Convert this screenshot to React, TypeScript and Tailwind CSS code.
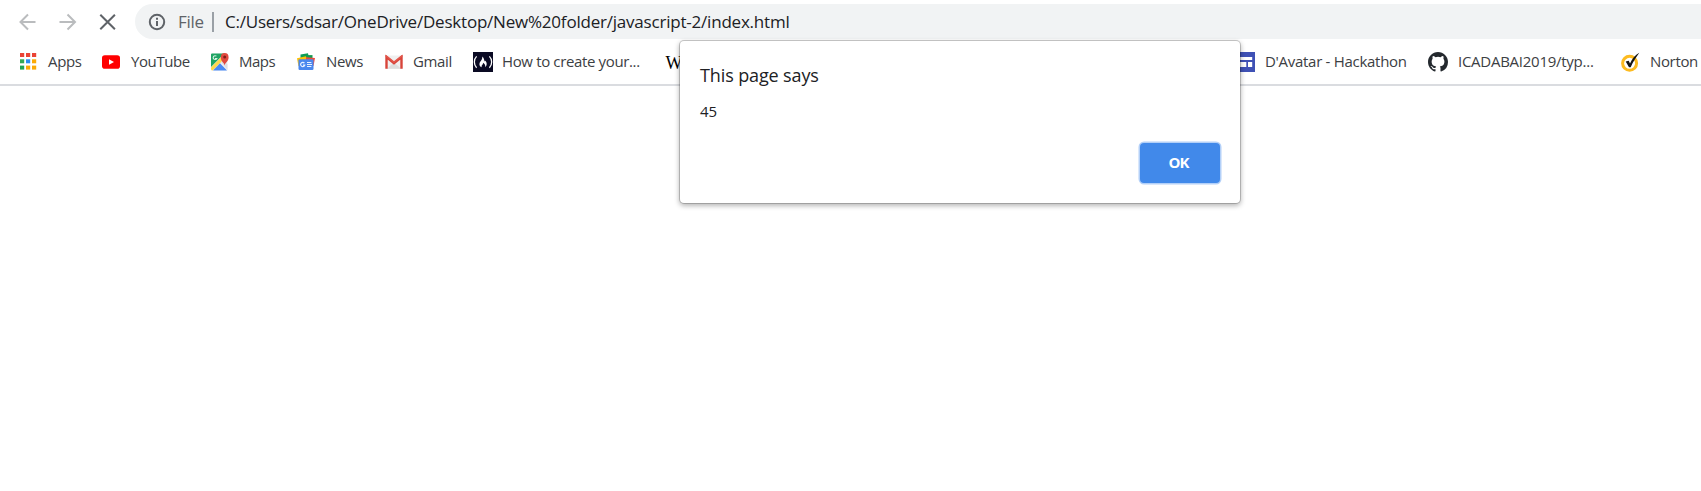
import type { ReactNode } from "react";

const Icon = ({ children }: { children: ReactNode }) => (
  <svg viewBox="0 0 20 20" className="h-5 w-5 shrink-0">{children}</svg>
);

const AppsIcon = () => (
  <Icon>
    {[["#ea4335", "#ea4335", "#ea4335"], ["#34a853", "#2a8cf0", "#fbaa05"], ["#21a453", "#fbaa05", "#fbaa05"]].map((row, r) =>
      row.map((fill, c) => <rect key={`${r}${c}`} x={2 + c * 6} y={1 + r * 6.3} width="4.2" height="4" fill={fill} />)
    )}
  </Icon>
);

const YouTubeIcon = () => (
  <Icon>
    <rect x="1" y="3.3" width="18" height="13.4" rx="2.8" fill="#f00" />
    <path d="M8 7.2v5.6l5-2.8z" fill="#fff" />
  </Icon>
);

const MapsIcon = () => (
  <Icon>
    <path d="M2 1.6h14l1.5 2v14.8H1V2.6z" fill="#f1f1f1" />
    <path d="M2 1.6h12.4L1 15V2.6q0-1 1-1z" fill="#1fa463" />
    <path d="M1 15.5 11.4 5l2 2.8L2.6 18.4Q1 18.4 1 17z" fill="#ffd84b" />
    <path d="M3 18.4 10 11.2l7 7.2z" fill="#4a89f3" />
    <path d="m11 10.3 3-2.8 3.5 5v5.3z" fill="#dfe0e3" />
    <path d="M14.6 13.4c-.3-3-3.8-4-3.8-8a3.8 4.2 0 0 1 7.8 0c0 4-3.6 5-4 8z" fill="#e04a3f" />
    <circle cx="14.7" cy="5" r="1.5" fill="#7e1d16" />
    <path d="M6.4 4.2a1.9 1.9 0 1 0 .3 2.4H5" fill="none" stroke="#d9f3e4" strokeWidth="1.1" />
  </Icon>
);

const NewsIcon = () => (
  <Icon>
    <path d="M4.5 2.6 12 1.3l1 5H4.5z" fill="#0c9d58" />
    <path d="M9 3.1h7.5V8H9z" fill="#139a50" />
    <path d="m1 6.2 9-2 1 5-8.5 5z" fill="#ffc107" />
    <path d="m10 5.2 9 .8-1.500 8L10 10z" fill="#ee4b3e" />
    <rect x="2.5" y="7.2" width="15" height="10.8" rx="1.2" fill="#4a87ee" />
    <path d="M8.4 11.2a2.1 2.1 0 1 0 .3 2H7M11 10.5h4.4M11 12.5h5M11 14.5h4.4" fill="none" stroke="#e9f0ff" strokeWidth="1.2" />
  </Icon>
);

const GmailIcon = () => (
  <Icon>
    <path d="M2 3.5h16v13.3H2z" fill="#f0f0f0" />
    <path d="m3 16.8 7-6.5 7 6.5z" fill="#dedede" />
    <path d="M2.5 16.8V5l7.5 6.3L17.5 5v11.8" fill="none" stroke="#d8443a" strokeWidth="2.4" />
    <path d="m1.8 3.6 8.2 6.6 8.2-6.6" fill="none" stroke="#e3564b" strokeWidth="1.5" />
  </Icon>
);

const CampIcon = () => (
  <Icon>
    <rect width="20" height="20" fill="#0a0a23" />
    <path d="M3.6 4.4C.6 7.3.6 12.7 3.6 15.8M16.4 4.4c3 2.9 3 8.3 0 11.4" fill="none" stroke="#fff" strokeWidth="1.3" />
    <path d="M9.2 4.5c2.2 1.7 1.7 3.7 2.7 5 .4-.2.4-.6.4-1 1.9 2 2 4.9-.2 6.7.5-1.7-.2-3.2-2-4.4.2 1.8-2 2.4-1.5 4.4-2.9-1.5-2.5-4.3-.8-6.3 1-1.300 1.700-2.400 1.400-4.400z" fill="#fff" />
  </Icon>
);

const WikiIcon = () => (
  <span className="flex h-5 w-5 shrink-0 items-center justify-center pl-1.5 pt-0.5 font-['Liberation_Serif',serif] text-[18px] leading-5 text-black">W</span>
);

const SitesIcon = () => (
  <Icon>
    <rect width="20" height="20" fill="#3f51b5" />
    <path d="M2.5 5h14.7v3H2.5zM2.5 10h8.8v5H2.5zM13 10h4.2v5H13z" fill="#fff" />
  </Icon>
);

const GitHubIcon = () => (
  <svg viewBox="0 0 16 16" className="h-5 w-5 shrink-0" fill="#24292e">
    <path d="M8 0C3.58 0 0 3.58 0 8c0 3.54 2.29 6.53 5.47 7.59.4.07.55-.17.55-.38 0-.19-.01-.82-.01-1.49-2.01.37-2.53-.49-2.69-.94-.09-.23-.48-.94-.82-1.13-.28-.15-.68-.52-.01-.53.63-.01 1.08.58 1.23.82.72 1.21 1.87.87 2.33.66.07-.52.28-.87.51-1.07-1.78-.2-3.64-.89-3.64-3.95 0-.87.31-1.59.82-2.15-.08-.2-.36-1.02.08-2.12 0 0 .67-.21 2.2.82a7.42 7.42 0 0 1 4 0c1.53-1.04 2.2-.82 2.2-.82.44 1.1.16 1.92.08 2.12.51.56.82 1.27.82 2.15 0 3.07-1.87 3.75-3.65 3.95.29.25.54.73.54 1.48 0 1.07-.01 1.93-.01 2.2 0 .21.15.46.55.38A8.01 8.01 0 0 0 16 8c0-4.42-3.58-8-8-8z" />
  </svg>
);

const NortonIcon = () => (
  <Icon>
    <circle cx="9.6" cy="11.3" r="7" fill="#fff" stroke="#fdbb20" strokeWidth="3" />
    <path d="m5.7 9.5 3-.8 1.3 2.7C12 7 15 3.3 19.3.8 16 5.2 13 10 10.7 15.2H9z" fill="#151515" />
  </Icon>
);

const bookmarks = [
  { name: "Apps", icon: <AppsIcon />, size: "w-[63px]", track: "tracking-[-0.35px]" },
  { name: "YouTube", icon: <YouTubeIcon />, size: "w-[89px]", track: "tracking-[-0.4px]" },
  { name: "Maps", icon: <MapsIcon />, size: "w-[66px]", track: "-ml-px tracking-[-0.5px]" },
  { name: "News", icon: <NewsIcon />, size: "w-[68px]", track: "tracking-[-0.35px]" },
  { name: "Gmail", icon: <GmailIcon />, size: "w-[69px]", track: "-ml-px tracking-[-0.35px]" },
  { name: "How to create your...", icon: <CampIcon />, size: "w-[168px]", track: "-ml-px tracking-[-0.36px]" },
  { name: "", icon: <WikiIcon />, size: "w-[554px]", track: "" },
  { name: "D'Avatar - Hackathon", icon: <SitesIcon />, size: "w-[173px]", track: "tracking-[-0.29px]" },
  { name: "ICADABAI2019/typ...", icon: <GitHubIcon />, size: "w-[172px]", track: "tracking-[-0.26px]" },
  { name: "Norton", icon: <NortonIcon />, size: "w-[80px]", track: "tracking-[-0.35px]" },
];

const NavButtons = () => (
  <div className="flex items-center gap-5">
    <svg viewBox="0 0 20 20" className="h-5 w-5" fill="none" stroke="#babcbe" strokeWidth="2">
      <path d="M17.500 10H3M10 2.500 2.500 10l7.500 7.500" />
    </svg>
    <svg viewBox="0 0 20 20" className="h-5 w-5" fill="none" stroke="#babcbe" strokeWidth="2">
      <path d="M1.500 10H16.500M9.500 2.500l7.500 7.500-7.500 7.500" />
    </svg>
    <svg viewBox="0 0 20 20" className="h-5 w-5" fill="none" stroke="#5f6368" strokeWidth="2">
      <path d="m2.300 2.700 14.600 14.600M16.900 2.700 2.300 17.300" />
    </svg>
  </div>
);

const InfoIcon = () => (
  <svg viewBox="0 0 18 18" className="h-[18px] w-[18px] shrink-0" fill="none" stroke="#5f6368" strokeWidth="2">
    <circle cx="9" cy="9" r="7.2" />
    <path d="M9 8v5M9 4.800v2" />
  </svg>
);

export default function App() {
  return (
    <div className="relative h-[491px] w-full overflow-hidden bg-white font-['Open_Sans','Noto_Sans',sans-serif]">
      <header className="flex h-[86px] flex-col border-b-2 border-[#dadce0] pt-1">
        <div className="flex h-[35px] shrink-0 items-center pl-[18px]">
          <NavButtons />
          <div className="ml-[17px] flex h-full flex-1 items-center rounded-l-full bg-[#f1f3f4] pl-[13px] text-[17px]">
            <InfoIcon />
            <span className="ml-[12px] w-[34px] tracking-[-0.3px] text-[#5f6368]">File</span>
            <span className="h-5 w-0.5 bg-[#9aa0a6]" />
            <span className="ml-[11px] whitespace-nowrap tracking-[-0.21px] text-[#202124]">C:/Users/sdsar/OneDrive/Desktop/New%20folder/javascript-2/index.html</span>
          </div>
        </div>
        <nav className="flex flex-1 items-center gap-5 pl-[18px]">
          {bookmarks.map((b) => (
            <a key={b.name} className={`flex shrink-0 items-center gap-[10px] whitespace-nowrap text-[15px] text-[#3c4043] ${b.size}`}>
              {b.icon}
              <span className={b.track}>{b.name}</span>
            </a>
          ))}
        </nav>
      </header>
      <div
        role="dialog"
        className="absolute left-[680px] top-[40.5px] flex h-[162px] w-[559.5px] flex-col rounded-[4px] bg-white px-5 pt-[21.5px] text-[#202124] shadow-[0_0_0_1px_rgba(0,0,0,0.18),0_2px_5px_1px_rgba(0,0,0,0.28)]"
      >
        <h1 className="text-[18px] leading-[27px] tracking-[-0.12px]">This page says</h1>
        <p className="mt-[11px] text-[15px] leading-[22px]">45</p>
        <button className="mt-[21px] flex h-10 w-20 items-center justify-center self-end rounded-[4px] bg-[#4189ea] pb-0.5 pr-0.5 text-[15px] font-bold tracking-[-0.9px] text-white shadow-[0_0_0_1.5px_#b3d0f8]">
          OK
        </button>
      </div>
    </div>
  );
}
